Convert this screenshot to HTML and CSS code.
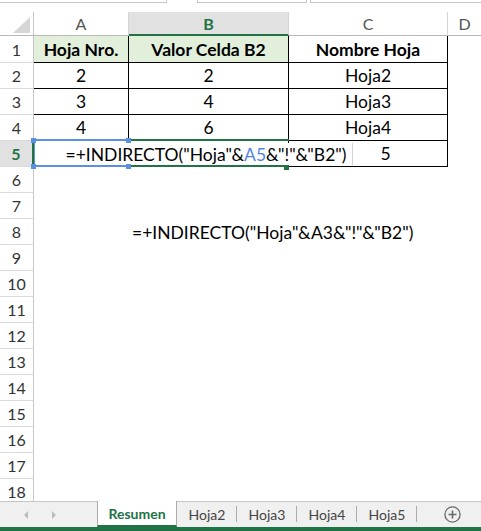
FILE: index.html
```html
<!DOCTYPE html>
<html>
<head>
  <meta charset="UTF-8">
  <title>Resumen - INDIRECTO</title>
  <link rel="stylesheet" href="styles.css">
</head>
<body>
  <div class="topstrip">
    <div class="box box-name"></div>
    <div class="box box-mid"></div>
    <div class="box box-formula"></div>
  </div>

  <div class="sheet">
    <div class="row head-row">
      <div class="corner"><span class="tri"></span></div>
      <div class="colhead">A</div>
      <div class="colhead active">B</div>
      <div class="colhead">C</div>
      <div class="colhead last">D</div>
    </div>

    <div class="row first">
      <div class="rowhead">1</div>
      <div class="cell tb title">Hoja Nro.</div>
      <div class="cell tb title">Valor Celda B2</div>
      <div class="cell tb bold">Nombre Hoja</div>
      <div class="cell"></div>
    </div>
    <div class="row">
      <div class="rowhead">2</div>
      <div class="cell tb">2</div>
      <div class="cell tb">2</div>
      <div class="cell tb">Hoja2</div>
      <div class="cell"></div>
    </div>
    <div class="row">
      <div class="rowhead">3</div>
      <div class="cell tb">3</div>
      <div class="cell tb">4</div>
      <div class="cell tb">Hoja3</div>
      <div class="cell"></div>
    </div>
    <div class="row">
      <div class="rowhead">4</div>
      <div class="cell tb">4</div>
      <div class="cell tb">6</div>
      <div class="cell tb">Hoja4</div>
      <div class="cell"></div>
    </div>
    <div class="row editing">
      <div class="rowhead active">5</div>
      <div class="cell tb ref"></div>
      <div class="cell tb current"></div>
      <div class="cell tb five">5</div>
      <div class="cell"></div>
      <div class="edit-box">=+INDIRECTO("Hoja"&amp;<span class="ref-text">A5</span>&amp;"!"&amp;"B2")</div>
    </div>
    <div class="row"><div class="rowhead">6</div></div>
    <div class="row"><div class="rowhead">7</div></div>
    <div class="row">
      <div class="rowhead">8</div>
      <div class="cell"></div>
      <div class="cell note">=+INDIRECTO("Hoja"&amp;A3&amp;"!"&amp;"B2")</div>
    </div>
    <div class="row"><div class="rowhead">9</div></div>
    <div class="row"><div class="rowhead">10</div></div>
    <div class="row"><div class="rowhead">11</div></div>
    <div class="row"><div class="rowhead">12</div></div>
    <div class="row"><div class="rowhead">13</div></div>
    <div class="row"><div class="rowhead">14</div></div>
    <div class="row"><div class="rowhead">15</div></div>
    <div class="row"><div class="rowhead">16</div></div>
    <div class="row"><div class="rowhead">17</div></div>
    <div class="row"><div class="rowhead">18</div></div>
  </div>

  <div class="tabbar">
    <div class="nav">
      <span class="arrow left"></span>
      <span class="arrow right"></span>
    </div>
    <div class="tab selected">Resumen</div>
    <div class="tab">Hoja2</div>
    <div class="tab">Hoja3</div>
    <div class="tab">Hoja4</div>
    <div class="tab">Hoja5</div>
    <div class="add">
      <svg width="17" height="17" viewBox="0 0 17 17">
        <circle cx="8.5" cy="8.5" r="7.6" fill="none" stroke="#6a6a6a" stroke-width="1.3"/>
        <path d="M8.5 4.5v8M4.5 8.5h8" stroke="#6a6a6a" stroke-width="1.6"/>
      </svg>
    </div>
  </div>
</body>
</html>
```

FILE: styles.css
```css
* {
  box-sizing: border-box;
}

body {
  margin: 0;
  width: 481px;
  height: 531px;
  overflow: hidden;
  background: #fff;
  font-family: Lato, "Open Sans", sans-serif;
  color: #000;
  display: flex;
  flex-direction: column;
}

/* remains of the formula bar at the top */
.topstrip {
  display: flex;
  height: 3px;
  margin-bottom: 9px;
}

.box {
  border-bottom: 1px solid #c6c6c6;
  border-right: 1px solid #c6c6c6;
}

.box-name { width: 167px; }
.box-mid { width: 110px; margin-left: 30px; border-left: 1px solid #c6c6c6; }
.box-formula { flex: 1; margin-left: 3px; border-left: 1px solid #c6c6c6; border-right: none; }

.sheet {
  flex: 1;
  overflow: hidden;
}

.row {
  display: grid;
  grid-template-columns: 34px 95px 160px 159px 33px;
  height: 26px;
  position: relative;
}

.head-row {
  height: 24px;
}

.row.first {
  height: 27px;
}

.corner {
  position: relative;
  border-right: 1px solid #c6c6c6;
  border-bottom: 1px solid #b8b8b8;
}

.tri {
  position: absolute;
  right: 3px;
  bottom: 2px;
  width: 0;
  height: 0;
  border-left: 17px solid transparent;
  border-bottom: 16px solid #d6d6d6;
}

.colhead {
  display: flex;
  align-items: center;
  justify-content: center;
  font-size: 16px;
  color: #555;
  border-right: 1px solid #d4d4d4;
  border-bottom: 1px solid #b8b8b8;
}

.colhead.active {
  background: #e1e1e1;
  color: #217346;
  font-weight: bold;
  border-bottom: 2px solid #217346;
}

.colhead.last {
  border-right: none;
}

.rowhead {
  display: flex;
  align-items: center;
  justify-content: center;
  font-size: 16px;
  color: #333;
  border-right: 1px solid #c6c6c6;
  border-bottom: 1px solid #dadada;
}

.rowhead.active {
  background: #e1e1e1;
  color: #217346;
  font-weight: bold;
  border-right: 2px solid #217346;
}

.cell {
  display: flex;
  align-items: center;
  justify-content: center;
  font-size: 17.5px;
  white-space: nowrap;
  position: relative;
}

/* cells of the bordered table A1:C5 */
.cell.tb {
  border-right: 1px solid #000;
  border-bottom: 1px solid #000;
}

.cell.title {
  background: #e2efda;
  font-weight: bold;
}

.cell.bold {
  font-weight: bold;
}

.cell.note {
  justify-content: flex-start;
  padding-left: 3px;
  overflow: visible;
}

.cell.five {
  padding-left: 35px;
}

/* reference box around A5 while editing */
.cell.ref::after {
  content: '';
  position: absolute;
  top: -2px;
  left: 0;
  right: -2px;
  bottom: -1px;
  border: 2px solid #5b8fe2;
  border-left-width: 1px;
  border-right-width: 0;
  pointer-events: none;
}

.cell.current::after {
  content: '';
  position: absolute;
  top: -2px;
  left: 0;
  right: -1px;
  bottom: -1px;
  border-top: 2px solid #217346;
  border-bottom: 2px solid #217346;
}

.edit-box {
  position: absolute;
  top: 2px;
  bottom: 2px;
  left: 60px;
  width: 293px;
  background: #fff;
  border-right: 1px solid #d2d2d2;
  display: flex;
  align-items: center;
  justify-content: center;
  font-size: 17.5px;
  white-space: nowrap;
}

.ref-text {
  color: #4f86e0;
}

/* small drag handles */
.editing::before,
.editing::after {
  content: '';
  position: absolute;
  width: 5px;
  height: 5px;
  z-index: 2;
}

.editing::before {
  left: 31px;
  top: -3px;
  background: #5b8fe2;
  box-shadow: 95px 0 0 #5b8fe2, 0 26px 0 #5b8fe2, 95px 26px 0 #5b8fe2;
}

.editing::after {
  left: 284px;
  top: 24px;
  background: #217346;
}

/* sheet tabs */
.tabbar {
  height: 30px;
  display: flex;
  background: #f0f0f0;
  border-top: 1px solid #c6c6c6;
  border-bottom: 4px solid #217346;
  font-size: 14px;
  color: #444;
}

.nav {
  width: 97px;
  display: flex;
  align-items: center;
  padding-left: 24px;
  gap: 24px;
}

.arrow {
  width: 0;
  height: 0;
  border-top: 4px solid transparent;
  border-bottom: 4px solid transparent;
}

.arrow.left {
  border-right: 4px solid #bdbdbd;
}

.arrow.right {
  border-left: 4px solid #bdbdbd;
}

.tab {
  width: 60px;
  display: flex;
  align-items: center;
  justify-content: center;
  position: relative;
}

.tab::after {
  content: '';
  position: absolute;
  right: 0;
  top: 4px;
  height: 16px;
  border-right: 1px solid #ababab;
}

.tab.selected {
  width: 80px;
  margin-top: -1px;
  background: #fff;
  color: #217346;
  font-weight: bold;
  border-left: 1px solid #ababab;
  border-right: 1px solid #ababab;
  border-bottom: 2px solid #217346;
}

.tab.selected::after {
  display: none;
}

.add {
  flex: 1;
  display: flex;
  align-items: center;
  justify-content: center;
  padding-left: 6px;
}

.add svg {
  display: block;
}
```
